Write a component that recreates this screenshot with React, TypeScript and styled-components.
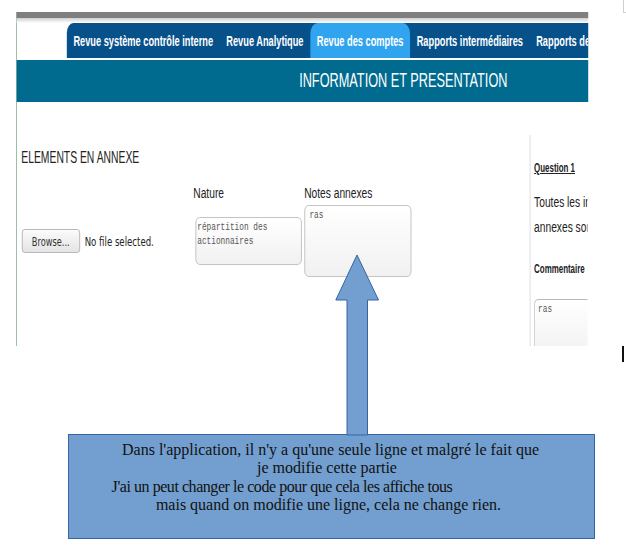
import React from "react";
import styled, { createGlobalStyle } from "styled-components";

// the app part of the screenshot is squeezed horizontally; lay it out at
// natural width and compress it as a whole
const SQUEEZE = 0.66;

const GlobalStyle = createGlobalStyle`
  html, body { margin: 0; padding: 0; background: #fff; }
  body {
    font-family: "Liberation Sans", Arial, sans-serif;
    color: #222;
  }
`;

const Page = styled.div`
  position: relative;
  width: 626px;
  height: 553px;
  overflow: hidden;
  padding-top: 12px;
  box-sizing: border-box;
`;

const Frame = styled.div`
  margin-left: 16px;
  width: ${572 / SQUEEZE}px;
  box-sizing: border-box;
  border-left: 1.5px solid #6b9f7d;
  transform: scaleX(${SQUEEZE});
  transform-origin: left top;
`;

const GrayBar = styled.div`
  height: 6px;
  background: #7f7f7f;
`;

const Shade = styled.div`
  height: 5px;
  background: linear-gradient(#cfcfcf, #ffffff);
`;

const TabBar = styled.nav`
  margin-left: 76px;
  height: 35px;
  display: flex;
  background: #07518b;
  border-top-left-radius: 10px;
  overflow: hidden;
  white-space: nowrap;
`;

const Tab = styled.div<{ $active?: boolean }>`
  display: flex;
  align-items: center;
  padding: 0 10px;
  color: #fff;
  font-weight: bold;
  font-size: 14px;
  background: ${(p) => (p.$active ? "#31a4ef" : "transparent")};
  border-radius: 11px 11px 0 0;
`;

const Banner = styled.div`
  margin-top: 2px;
  height: 42px;
  display: flex;
  align-items: center;
  padding-left: 428px;
  background: #006b8f;
  color: #fff;
  font-size: 19.3px;
`;

const Content = styled.div`
  display: flex;
  height: 244px;
`;

const Main = styled.div`
  width: 777px;
  padding: 48px 0 0 7px;
  box-sizing: border-box;
`;

const SectionTitle = styled.div`
  font-size: 15.7px;
  line-height: 15px;
`;

const Fields = styled.div`
  display: flex;
  align-items: flex-start;
  margin-top: 20px;
`;

const FileGroup = styled.div`
  width: 260px;
  margin-left: 0.6px;
  padding-top: 44px;
  display: flex;
  align-items: center;
  gap: 7.5px;
`;

const BrowseButton = styled.button`
  width: 88px;
  height: 24px;
  padding: 0;
  border: 1.5px solid #a9a9a9;
  border-radius: 4px;
  background: linear-gradient(#fbfbfb, #e4e4e4);
  font-family: "DejaVu Sans", sans-serif;
  font-size: 12.5px;
  color: #333;
`;

const FileText = styled.span`
  font-family: "DejaVu Sans", sans-serif;
  font-size: 13px;
  color: #222;
`;

const FieldGroup = styled.div<{ $width: number }>`
  width: ${(p) => p.$width}px;
  display: flex;
  flex-direction: column;
`;

const Label = styled.div`
  font-size: 15.5px;
  line-height: 15px;
`;

const Area = styled.textarea<{ $w: number; $h: number; $top: number; $left?: number; $pad?: number }>`
  display: block;
  box-sizing: border-box;
  width: ${(p) => p.$w}px;
  height: ${(p) => p.$h}px;
  margin: ${(p) => p.$top}px 0 0 ${(p) => p.$left ?? 0}px;
  padding: 3px ${(p) => p.$pad ?? 2}px;
  border: 1.5px solid #b8b8b8;
  border-radius: 6px;
  background: linear-gradient(#ffffff, #f1f1f1);
  font-family: "Liberation Mono", "DejaVu Sans Mono", monospace;
  font-size: 11.8px;
  line-height: 13.7px;
  color: #555;
  resize: none;
  overflow: hidden;
`;

const SidePanel = styled.aside`
  width: 88px;
  box-sizing: border-box;
  margin-top: 33px;
  padding: 27px 0 0 5px;
  border-left: 2.5px solid #e6e6e6;
  overflow: hidden;
  white-space: nowrap;
`;

const Question = styled.div`
  font-size: 12px;
  line-height: 12px;
  font-weight: bold;
  text-decoration: underline;
`;

const QuestionText = styled.div`
  margin-top: 15px;
  font-size: 15.5px;
  line-height: 25px;
`;

const CommentLabel = styled.div`
  margin-top: 24px;
  font-size: 12px;
  line-height: 12px;
  font-weight: bold;
`;

const SideArea = styled(Area)`
  border-right: none;
  border-radius: 6px 0 0 0;
`;

const Callout = styled.div`
  margin: 88px 0 0 68px;
  width: 527px;
  height: 105px;
  box-sizing: border-box;
  padding-top: 6px;
  background: #729fcf;
  border: 1px solid #3465a4;
  font-family: "Liberation Serif", serif;
  font-size: 16px;
  line-height: 18.4px;
  color: #111;
  text-align: center;
  white-space: nowrap;
`;

const CalloutLine = styled.div<{ $shift?: number; $tight?: boolean }>`
  padding-right: ${(p) => p.$shift ?? 0}px;
  letter-spacing: ${(p) => (p.$tight ? "-0.45px" : "normal")};
`;

const Arrow = styled.svg`
  position: absolute;
  left: 335px;
  top: 254px;
`;

const Caret = styled.div`
  position: absolute;
  left: 622px;
  top: 346px;
  width: 2px;
  height: 16px;
  background: #111;
`;

const CornerBox = styled.div`
  position: absolute;
  left: 623px;
  top: -1px;
  width: 10px;
  height: 12px;
  border: 1px solid #cfcfcf;
`;

const tabs = [
  "Revue système contrôle interne",
  "Revue Analytique",
  "Revue des comptes",
  "Rapports intermédiaires",
  "Rapports des",
];

export default function App() {
  return (
    <Page>
      <GlobalStyle />
      <CornerBox />
      <Frame>
        <GrayBar />
        <Shade />
        <TabBar>
          {tabs.map((t) => (
            <Tab key={t} $active={t === "Revue des comptes"}>
              {t}
            </Tab>
          ))}
        </TabBar>
        <Banner>INFORMATION ET PRESENTATION</Banner>
        <Content>
          <Main>
            <SectionTitle>ELEMENTS EN ANNEXE</SectionTitle>
            <Fields>
              <FileGroup>
                <BrowseButton>Browse...</BrowseButton>
                <FileText>No file selected.</FileText>
              </FileGroup>
              <FieldGroup $width={168}>
                <Label>Nature</Label>
                <Area $w={161} $h={48} $top={17} $left={3} readOnly defaultValue={"répartition des actionnaires"} />
              </FieldGroup>
              <FieldGroup $width={170}>
                <Label>Notes annexes</Label>
                <Area $w={162} $h={72} $top={5} $pad={7} readOnly defaultValue="ras" />
              </FieldGroup>
            </Fields>
          </Main>
          <SidePanel>
            <Question>Question 1</Question>
            <QuestionText>
              Toutes les informations
              <br />
              annexes sont
            </QuestionText>
            <CommentLabel>Commentaire</CommentLabel>
            <SideArea $w={120} $h={60} $top={24} $pad={5} readOnly defaultValue="ras" />
          </SidePanel>
        </Content>
      </Frame>
      <Callout>
        <CalloutLine $shift={2}>Dans l'application, il n'y a qu'une seule ligne et malgré le fait que</CalloutLine>
        <CalloutLine $shift={9}>je modifie cette partie</CalloutLine>
        <CalloutLine $shift={99} $tight>J'ai un peut changer le code pour que cela les affiche tous</CalloutLine>
        <CalloutLine $shift={6}>mais quand on modifie une ligne, cela ne change rien.</CalloutLine>
      </Callout>
      <Arrow width="45" height="182" viewBox="0 0 45 182">
        <polygon
          points="22,1 43.5,46 32.5,46 32.5,181 12,181 12,46 0.8,46"
          fill="#729fcf"
          stroke="#3465a4"
          strokeWidth="1"
        />
      </Arrow>
      <Caret />
    </Page>
  );
}
